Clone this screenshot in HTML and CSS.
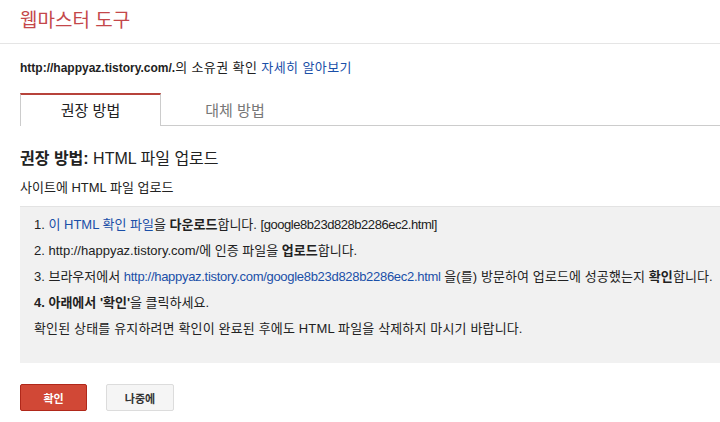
FILE: index.html
```html
<!DOCTYPE html>
<html lang="ko">
<head>
<meta charset="utf-8">
<title>웹마스터 도구</title>
<link rel="stylesheet" href="styles.css">
</head>
<body>
<header class="topbar">
  <h1 class="title">웹마스터 도구</h1>
</header>
<main class="content">
  <p class="owner"><b class="owner-url">http://happyaz.tistory.com/.</b><span class="owner-ko">의 소유권 확인 <a class="link" href="#">자세히 알아보기</a></span></p>
  <div class="tabs">
    <div class="tab tab-active">권장 방법</div>
    <div class="tab tab-other">대체 방법</div>
    <div class="tab-fill"></div>
  </div>
  <h2 class="method-title"><b>권장 방법:</b> HTML 파일 업로드</h2>
  <p class="method-sub">사이트에 HTML 파일 업로드</p>
  <div class="steps">
    <p class="step">1. <a class="link" href="#">이 HTML 확인 파일</a>을 <b>다운로드</b>합니다. <span class="fname">[google8b23d828b2286ec2.html]</span></p>
    <p class="step">2. http://happyaz.tistory.com/에 인증 파일을 <b>업로드</b>합니다.</p>
    <p class="step">3. 브라우저에서 <a class="link url" href="#">http://happyaz.tistory.com/google8b23d828b2286ec2.html</a> <span class="tail">을(를) 방문하여 업로드에 성공했는지 <b>확인</b>합니다.</span></p>
    <p class="step"><b>4. 아래에서 '확인'</b>을 클릭하세요.</p>
    <p class="step wide">확인된 상태를 유지하려면 확인이 완료된 후에도 HTML 파일을 삭제하지 마시기 바랍니다.</p>
  </div>
  <div class="actions">
    <button class="btn btn-primary" type="button">확인</button>
    <button class="btn btn-default" type="button">나중에</button>
  </div>
</main>
</body>
</html>
```
FILE: styles.css
```css
html, body {
  margin: 0;
  padding: 0;
  background: #fff;
  overflow: hidden;
}
body {
  font-family: "Liberation Sans", Arial, "Noto Sans CJK KR", sans-serif;
  font-size: 13px;
  color: #222;
}
.topbar {
  height: 44px;
  border-bottom: 1px solid #e5e5e5;
  box-sizing: border-box;
  padding-left: 20px;
  display: flex;
  align-items: flex-start;
}
.title {
  margin: 5px 0 0;
  font-size: 19px;
  font-weight: normal;
  color: #c4474a;
}
.content {
  padding-left: 20px;
}
.owner {
  margin: 0;
  padding-top: 16px;
  height: 33px;
  line-height: 16px;
  font-size: 12px;
  white-space: nowrap;
}
.owner-url {
  font-weight: bold;
}
.owner-ko {
  font-size: 13px;
  letter-spacing: 0.4px;
}
.link {
  color: #1a4fa8;
  text-decoration: none;
}
.tabs {
  display: flex;
  height: 33px;
}
.tab {
  box-sizing: border-box;
  display: flex;
  align-items: center;
  justify-content: center;
  font-size: 15px;
}
.tab-active {
  width: 141px;
  border-top: 2px solid #b7433b;
  border-left: 1px solid #ccc;
  border-right: 1px solid #ccc;
  color: #222;
  padding-bottom: 2px;
}
.tab-other {
  width: 148px;
  border-bottom: 1px solid #ccc;
  color: #777;
}
.tab-fill {
  flex: 1;
  border-bottom: 1px solid #ccc;
}
.method-title {
  margin: 23px 0 0;
  font-size: 16px;
  font-weight: normal;
  line-height: 20px;
  color: #222;
}
.method-sub {
  margin: 9px 0 0;
  line-height: 20px;
  font-size: 13px;
}
.steps {
  margin-top: 8px;
  background: #f1f1f1;
  border-top: 1px solid #e3e3e3;
  padding: 5px 0 0 14px;
  height: 157px;
  box-sizing: border-box;
}
.step {
  margin: 0;
  line-height: 26px;
  white-space: nowrap;
}
.fname {
  letter-spacing: -0.45px;
}
.url {
  letter-spacing: -0.3px;
}
.tail {
  letter-spacing: 0.1px;
}
.wide {
  letter-spacing: 0.15px;
}
.actions {
  display: flex;
  gap: 19px;
  margin-top: 21px;
}
.btn {
  height: 27px;
  box-sizing: border-box;
  font-family: inherit;
  font-size: 11px;
  font-weight: bold;
  border-radius: 2px;
  padding: 0;
  cursor: pointer;
}
.btn-primary {
  width: 67px;
  background: #d14836;
  border: 1px solid #b0281a;
  color: #fff;
}
.btn-default {
  width: 68px;
  background: #f5f5f5;
  border: 1px solid #dcdcdc;
  color: #333;
}
```
